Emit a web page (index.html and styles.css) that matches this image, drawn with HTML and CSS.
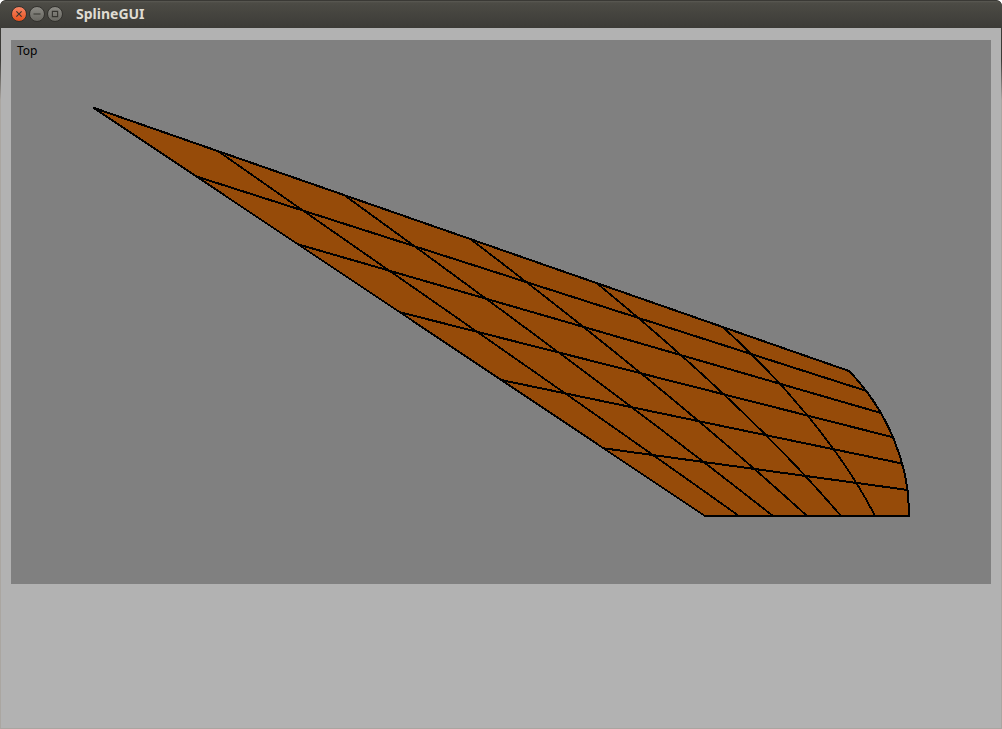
FILE: index.html
```html
<!DOCTYPE html>
<html lang="en">
<head>
<meta charset="utf-8">
<title>SplineGUI</title>
<link rel="stylesheet" href="styles.css">
</head>
<body>
<div class="window">
  <header class="titlebar">
    <button class="control control-close" type="button" aria-label="Close">
      <svg viewBox="0 0 16 16" aria-hidden="true"><path d="M5 5l6 6M11 5l-6 6"/></svg>
    </button>
    <button class="control" type="button" aria-label="Minimize">
      <svg viewBox="0 0 16 16" aria-hidden="true"><path d="M4 8h8"/></svg>
    </button>
    <button class="control" type="button" aria-label="Maximize">
      <svg viewBox="0 0 16 16" aria-hidden="true"><path d="M5 5h6v6h-6z"/></svg>
    </button>
    <h1 class="title">SplineGUI</h1>
  </header>
  <main class="content">
    <section class="viewport">
      <span class="view-label">Top</span>
      <svg class="surface" viewBox="11 40 980 544" role="img" aria-label="Spline surface, top view">
        <path class="face" d="M94 108L849 371C886 409 910 463 909 516H705Z"/>
        <g class="rows">
          <path d="M93 107.6L849 371"/>
          <path d="M195 176L866 390.8"/>
          <path d="M297 244L882 413.3"/>
          <path d="M399 312L894 437.5"/>
          <path d="M502 380.2L902 463.5"/>
          <path d="M603 448.2L908 490"/>
          <path d="M705 516H910"/>
        </g>
        <g class="columns">
          <path d="M93.5 107.8L705 516"/>
          <path d="M219 151.8C386 269 567 393.2 739 516"/>
          <path d="M345 195.7C482 295 635 407.2 773 516"/>
          <path d="M471 239.5C580 322.5 703 421 807 516"/>
          <path d="M597 283.3C678 350 772 435 841 516"/>
          <path d="M723 327.2C780 378.5 841 449 875 516"/>
        </g>
        <path class="rim" d="M849 371C886 409 910 463 909 516"/>
      </svg>
    </section>
  </main>
</div>
</body>
</html>
```
FILE: styles.css
```css
* {
  box-sizing: border-box;
}

body {
  margin: 0;
  background: #fff;
  font-family: "Noto Sans", "Open Sans", sans-serif;
}

.window {
  display: flex;
  flex-direction: column;
  min-height: 100vh;
  padding: 0 1px 1px;
  border-radius: 6px 6px 0 0;
  background: linear-gradient(#3c3b37 60px, #aaa6a1 100px);
  overflow: hidden;
}

.titlebar {
  display: flex;
  align-items: center;
  gap: 2px;
  height: 28px;
  margin: 0 -1px;
  padding: 0 11px 1px;
  border-top: 1px solid #3a3935;
  border-radius: 6px 6px 0 0;
  background: linear-gradient(#5b5a54 0, #4c4b45 2px, #3c3b37 100%);
}

.control {
  flex: none;
  width: 16px;
  height: 16px;
  padding: 0;
  border: 1px solid #33322e;
  border-radius: 50%;
  background: linear-gradient(#8b8a84, #686761);
  line-height: 0;
}

.control svg {
  display: block;
  width: 14px;
  height: 14px;
  fill: none;
  stroke: #35342f;
  stroke-width: 1.3;
}

.control-close {
  background: linear-gradient(#f68565, #e8511d);
}

.title {
  margin: 0 0 0 11px;
  color: #dfdbd2;
  font-size: 14px;
  font-weight: 700;
  line-height: 20px;
}

.content {
  flex: 1;
  padding: 12px 10px;
  background: #b2b2b2;
}

.viewport {
  position: relative;
  background: #808080;
}

.view-label {
  position: absolute;
  top: 2px;
  left: 6px;
  color: #000;
  font-size: 12px;
  line-height: 18px;
}

.surface {
  display: block;
  width: 100%;
  height: auto;
  shape-rendering: crispEdges;
}

.face {
  fill: #964b09;
}

.rows,
.columns,
.rim {
  fill: none;
  stroke: #000;
  stroke-width: 2;
}

.columns {
  stroke-width: 1.8;
}
```
